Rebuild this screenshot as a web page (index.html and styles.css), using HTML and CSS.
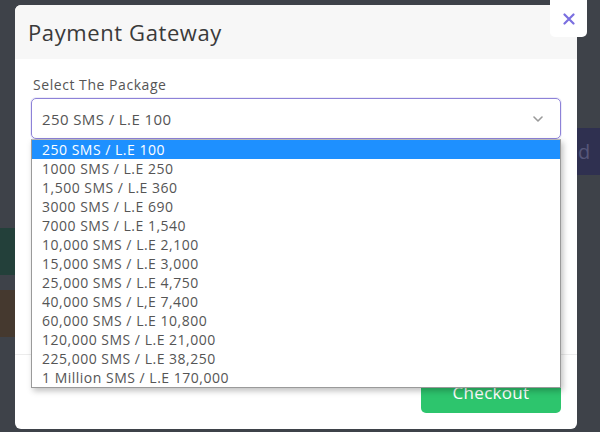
FILE: index.html
```html
<!DOCTYPE html>
<html>
<head>
<meta charset="utf-8">
<link rel="stylesheet" href="styles.css">
</head>
<body>
<div class="page">
  <div class="side side-left">
    <div class="band band-green"></div>
    <div class="band band-brown"></div>
  </div>
  <div class="side side-right">
    <div class="band band-navy">d</div>
  </div>
</div>

<div class="modal">
  <div class="modal-header">
    <h2 class="modal-title">Payment Gateway</h2>
  </div>
  <div class="modal-body">
    <label class="field-label">Select The Package</label>
    <div class="select-wrap">
      <div class="select">
        <span class="select-value">250 SMS / L.E 100</span>
        <svg class="chevron" width="10" height="6" viewBox="0 0 10 6"><path d="M1 1l4 4 4-4" fill="none" stroke="#9a9a9a" stroke-width="1.6" stroke-linecap="round" stroke-linejoin="round"/></svg>
      </div>
      <ul class="options">
        <li class="option selected">250 SMS / L.E 100</li>
        <li class="option">1000 SMS / L.E 250</li>
        <li class="option">1,500 SMS / L.E 360</li>
        <li class="option">3000 SMS / L.E 690</li>
        <li class="option">7000 SMS / L.E 1,540</li>
        <li class="option">10,000 SMS / L.E 2,100</li>
        <li class="option">15,000 SMS / L.E 3,000</li>
        <li class="option">25,000 SMS / L.E 4,750</li>
        <li class="option">40,000 SMS / L,E 7,400</li>
        <li class="option">60,000 SMS / L.E 10,800</li>
        <li class="option">120,000 SMS / L.E 21,000</li>
        <li class="option">225,000 SMS / L.E 38,250</li>
        <li class="option">1 Million SMS / L.E 170,000</li>
      </ul>
    </div>
  </div>
  <div class="modal-footer">
    <button class="btn-checkout">Checkout</button>
  </div>
</div>

<button class="close-btn" aria-label="Close">
  <svg width="12" height="12" viewBox="0 0 12 12"><path d="M1.5 1.5l9 9M10.5 1.5l-9 9" stroke="#7a6fe0" stroke-width="2.2" stroke-linecap="round"/></svg>
</button>
</body>
</html>
```

FILE: styles.css
```css
* { box-sizing: border-box; }
html, body {
  margin: 0;
  padding: 0;
  width: 600px;
  height: 432px;
  overflow: hidden;
}
body {
  background: #3e4249;
  font-family: "Open Sans", "Noto Sans", sans-serif;
  position: relative;
}
.page {
  display: flex;
  justify-content: space-between;
  height: 432px;
}
.side-left { width: 15px; padding-top: 228px; }
.side-right { width: 23px; padding-top: 128px; }
.band { width: 100%; }
.band-green { height: 47px; background: #23403a; }
.band-brown { height: 47px; margin-top: 15px; background: #45392f; }
.band-navy {
  height: 47px;
  background: #2f3050;
  color: #56577a;
  font-size: 20px;
  line-height: 47px;
  overflow: hidden;
  padding-left: 1px;
}

.modal {
  position: absolute;
  left: 15px;
  top: 5px;
  width: 562px;
  height: 424px;
  background: #fff;
  border-radius: 6px;
  display: flex;
  flex-direction: column;
}
.modal-header {
  height: 54px;
  background: #f7f7f7;
  border-radius: 6px 6px 0 0;
  display: flex;
  align-items: center;
  padding-left: 13px;
}
.modal-title {
  margin: 0;
  font-size: 22px;
  font-weight: 400;
  color: #3a3a3a;
  letter-spacing: 0.6px;
}
.modal-body {
  flex: 1;
  padding: 16px 16px 0 16px;
  border-bottom: 1px solid #ececec;
}
.field-label {
  display: block;
  font-size: 14px;
  color: #555;
  line-height: 19px;
  padding-left: 2px;
  margin-bottom: 4px;
  letter-spacing: 0.55px;
}
.select-wrap { position: relative; }
.select {
  height: 41px;
  border: 1px solid #8d82d8;
  border-radius: 5px;
  display: flex;
  align-items: center;
  justify-content: space-between;
  padding: 0 17px 0 10px;
  box-shadow: 0 0 0 1px rgba(141,130,216,0.15);
}
.select-value {
  font-size: 15px;
  color: #555;
  letter-spacing: 0.4px;
}
.options {
  position: absolute;
  left: 0;
  right: 0;
  top: 41px;
  margin: 0;
  padding: 0;
  list-style: none;
  background: #fff;
  border: 1px solid #9a9a9a;
  border-top: 1px solid #b8b8b8;
  box-shadow: 2px 3px 6px rgba(0,0,0,0.25);
  z-index: 5;
}
.option {
  height: 19px;
  line-height: 19px;
  font-size: 14px;
  color: #555;
  padding-left: 10px;
  letter-spacing: 0.5px;
  white-space: nowrap;
}
.option.selected {
  background: #1e90ff;
  color: #fff;
}
.modal-footer {
  height: 74px;
  display: flex;
  justify-content: flex-end;
  align-items: flex-start;
  padding: 16px 16px 0 0;
}
.btn-checkout {
  width: 140px;
  height: 42px;
  border: 0;
  border-radius: 5px;
  background: #2dc56d;
  color: #fff;
  font-family: "Open Sans", "Noto Sans", sans-serif;
  font-size: 17px;
  letter-spacing: 0.3px;
}
.close-btn {
  position: absolute;
  left: 550px;
  top: 0;
  width: 37px;
  height: 37px;
  border: 0;
  background: #fff;
  border-radius: 0 0 5px 5px;
  display: flex;
  align-items: center;
  justify-content: center;
  padding: 0;
}
```
